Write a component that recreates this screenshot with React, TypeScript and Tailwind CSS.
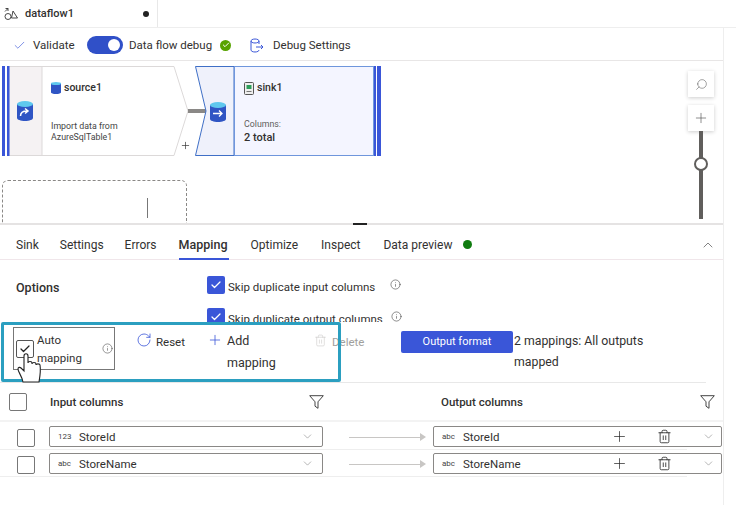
import { Check, ChevronDown, ChevronUp, Info, Plus, RotateCw, Search, Trash2 } from "lucide-react";

const FONT = "font-['Roboto','Liberation_Sans',sans-serif]";

function Funnel() {
  return (
    <svg width="15" height="14" viewBox="0 0 15 14" fill="none" stroke="#444" strokeWidth="1">
      <path d="M0.7 0.7h13.6L9 6.8v6.5L6 11.2V6.8z" />
    </svg>
  );
}

function DbIcon({ arrow }: { arrow: "curve" | "right" }) {
  return (
    <svg width="16" height="20" viewBox="0 0 16 20">
      <path d="M0 3v14c0 1.600 3.600 3 8 3s8-1.400 8-3V3z" fill="#2f55c4" />
      <ellipse cx="8" cy="3" rx="8" ry="3" fill="#5fc8ee" />
      {arrow === "curve" ? (
        <path d="M3.500 15c0-3.500 2-5 6.500-5M8 7.500l3 2.500-3 2.500" fill="none" stroke="#fff" strokeWidth="1.500" />
      ) : (
        <path d="M3 11.500h9M9 8.500l3 3-3 3" fill="none" stroke="#fff" strokeWidth="1.300" />
      )}
    </svg>
  );
}

function BlueCheck() {
  return (
    <span className="flex h-[18px] w-[18px] shrink-0 items-center justify-center rounded-[2px] bg-[#3a56d8]">
      <Check size={12} strokeWidth={2.5} className="text-white" />
    </span>
  );
}

function OptionRow({ label, infoLeft }: { label: string; infoLeft: string }) {
  return (
    <div className="flex h-[18px] items-center">
      <BlueCheck />
      <span className="ml-[3px] mt-[4px] whitespace-nowrap text-[#323130]">{label}</span>
      <Info size={11} strokeWidth={1.300} className={`${infoLeft} -mt-[1px] shrink-0 text-[#444]`} />
    </div>
  );
}

function EmptyBox({ className }: { className: string }) {
  return <span className={`block shrink-0 rounded-[2px] border border-[#777] bg-white ${className}`} />;
}

function Select({ kind, name, width, tools }: { kind: string; name: string; width: string; tools?: boolean }) {
  return (
    <div className={`flex h-[21px] items-center rounded-[2px] border border-[#8a8886] bg-white ${width}`}>
      <span className="ml-[8px] w-[21px] text-[8px] text-[#444]">{kind}</span>
      <span className="text-[#323130]">{name}</span>
      <span className="flex-1" />
      {tools && (
        <>
          <Plus size={17} strokeWidth={1} className="mr-[29px] text-[#222]" />
          <Trash2 size={15} strokeWidth={1.300} className="mr-[30px] text-[#222]" />
        </>
      )}
      <ChevronDown size={13} strokeWidth={1} className={`${tools ? "mr-[6px]" : "mr-[8px]"} text-[#777]`} />
    </div>
  );
}

function MappingRow({ kindIn, name }: { kindIn: string; name: string }) {
  return (
    <div className="mb-[3px] flex h-[24px] w-[687px] items-start border-b border-[#eeeeee] pl-[17px]">
      <EmptyBox className="mt-[3px] h-[18px] w-[18px]" />
      <div className="ml-[14px]">
        <Select kind={kindIn} name={name} width="w-[274px]" />
      </div>
      <div className="ml-[26px] mt-[7px] flex w-[77px] items-center">
        <span className="h-px w-[71px] bg-[#c8c6c4]" />
        <span className="h-0 w-0 border-y-[4px] border-l-[6px] border-y-transparent border-l-[#c8c6c4]" />
      </div>
      <div className="relative ml-[7px] shrink-0">
        <Select kind="abc" name={name} width="w-[289px]" tools />
      </div>
    </div>
  );
}

function Canvas() {
  return (
    <div className="relative h-[163px] w-[723px] overflow-hidden border-t border-[#e8e6e6]">
      {/* source node */}
      <div className="absolute left-[2px] top-[5px] h-[90px] w-[187px]">
        <svg className="absolute inset-0" width="187" height="90" viewBox="0 0 187 90">
          <path d="M7 0.500H172L186 45L172 89.500H7z" fill="#fff" stroke="#dcd9d9" />
          <rect x="7" y="0.500" width="33" height="89" fill="#f5f2f3" stroke="#dcd9d9" />
          <rect x="0" y="0" width="3" height="90" fill="#3a56d8" />
          <rect x="5" y="0" width="2.500" height="90" fill="#3a56d8" />
        </svg>
        <span className="absolute left-[15px] top-[35px]"><DbIcon arrow="curve" /></span>
        <div className="absolute left-[49px] top-[14px] flex items-center gap-[3px]">
          <svg width="10" height="12" viewBox="0 0 10 12">
            <path d="M0 1.500v9C0 11.300 2.200 12 5 12s5-.7 5-1.500v-9z" fill="#2f55c4" />
            <ellipse cx="5" cy="1.500" rx="5" ry="1.500" fill="#5fc8ee" />
          </svg>
          <span className="text-[10.500px] font-medium leading-4 text-[#323130]">source1</span>
        </div>
        <p className="absolute left-[49px] top-[55px] text-[8.800px] leading-[11px] text-[#444]">
          Import data from
          <br />
          AzureSqlTable1
        </p>
      </div>
      <Plus size={11} strokeWidth={1.500} className="absolute left-[180px] top-[79px] text-[#333]" />
      <span className="absolute left-[188px] top-[48px] h-[4px] w-[18px] bg-[#8a8886]" />
      {/* sink node */}
      <div className="absolute left-[195px] top-[5px] h-[90px] w-[186px]">
        <svg className="absolute inset-0" width="186" height="90" viewBox="0 0 186 90">
          <path d="M0.500 0.500H39V89.500H0.500L11 45z" fill="#eff1fb" stroke="#3f6fc6" />
          <rect x="39.500" y="0.500" width="139" height="89" fill="#f4f5ff" stroke="#6f96dc" />
          <rect x="179" y="0" width="2" height="90" fill="#3a56d8" />
          <rect x="182" y="0" width="4" height="90" fill="#3a56d8" />
        </svg>
        <span className="absolute left-[15px] top-[36px]"><DbIcon arrow="right" /></span>
        <div className="absolute left-[49px] top-[14px] flex items-center gap-[3px]">
          <svg width="10" height="13" viewBox="0 0 10 13">
            <rect x="0.500" y="0.500" width="9" height="12" rx="1" fill="#eee" stroke="#555" />
            <rect x="2.500" y="3" width="5" height="4" fill="#2e9d5b" />
            <path d="M2.500 9.500h5" stroke="#777" />
          </svg>
          <span className="text-[10.500px] font-medium leading-4 text-[#323130]">sink1</span>
        </div>
        <span className="absolute left-[49px] top-[52px] text-[8.800px] leading-[12px] text-[#605e5c]">Columns:</span>
        <span className="absolute left-[49px] top-[64px] text-[11px] font-medium leading-[16px] text-[#323130]">2 total</span>
      </div>
      {/* second, dashed node */}
      <div className="absolute left-[2px] top-[119px] h-[50px] w-[185px] rounded-[6px] border border-dashed border-[#8a8886]" />
      <span className="absolute left-[147px] top-[137px] h-[20px] w-px bg-[#777]" />
      {/* zoom controls */}
      <div className="absolute left-[688px] top-[10px] flex h-[26px] w-[26px] items-center justify-center bg-white shadow-[0_1px_4px_rgba(0,0,0,0.2)]">
        <Search size={13} strokeWidth={1} className="-scale-x-100 text-[#555]" />
      </div>
      <div className="absolute left-[688px] top-[44px] flex h-[26px] w-[26px] items-center justify-center bg-white shadow-[0_1px_4px_rgba(0,0,0,0.2)]">
        <Plus size={16} strokeWidth={1} className="text-[#555]" />
      </div>
      <span className="absolute left-[699px] top-[70px] h-[88px] w-[4px] bg-[#605e5c]" />
      <span className="absolute left-[694px] top-[96px] h-[14px] w-[14px] rounded-full border-2 border-[#605e5c] bg-white" />
    </div>
  );
}

export default function App() {
  return (
    <div className={`${FONT} relative h-[505px] w-[736px] overflow-hidden bg-white text-[11.500px] leading-4 text-[#323130]`}>
      {/* tab bar */}
      <div className="flex h-[28px] border-b border-[#eeeeee]">
        <div className="flex w-[158px] items-center border-r border-[#e8e8e8] pl-[4px]">
          <svg width="14" height="14" viewBox="0 0 14 14" fill="none" stroke="#333" strokeWidth="0.900">
            <circle cx="4" cy="9.500" r="3" />
            <path d="M9 4l4.500 7H7.500zM1 4.500l3-3M4 1.500h-2.500M4 1.500v2.500" />
          </svg>
          <span className="ml-[7px] text-[11px] font-medium">dataflow1</span>
          <span className="ml-[69px] h-[6px] w-[6px] rounded-full bg-[#222]" />
        </div>
      </div>
      {/* toolbar */}
      <div className="flex h-[32px] items-center pl-[13px] pt-[2px]">
        <Check size={13} strokeWidth={1.200} className="text-[#3a56d8]" />
        <span className="ml-[7px] w-[40px]">Validate</span>
        <span className="ml-[14px] flex h-[18px] w-[36px] items-center justify-end rounded-full bg-[#3050c8] pr-[3px]">
          <span className="h-[12px] w-[12px] rounded-full bg-white" />
        </span>
        <span className="ml-[6px] w-[84px]">Data flow debug</span>
        <span className="ml-[7px] flex h-[11px] w-[11px] items-center justify-center rounded-full bg-[#57a300]">
          <Check size={8} strokeWidth={3} className="text-white" />
        </span>
        <svg className="ml-[19px]" width="14" height="15" viewBox="0 0 14 15" fill="none" stroke="#3a56d8" strokeWidth="1">
          <path d="M1 3v9c0 1 1.500 2 4 2s4-1 4-2M1 3c0-1 1.500-2 4-2s4 1 4 2-1.500 2-4 2-4-1-4-2zM9 3v3M6 9h7M11 7l2 2-2 2" />
        </svg>
        <span className="ml-[9px]">Debug Settings</span>
      </div>
      <Canvas />
      {/* divider and resize handle */}
      <div className="relative h-[2px] w-[723px] bg-[#e5e3e3]">
        <span className="absolute left-[353px] top-0 h-[2px] w-[14px] bg-[#222]" />
      </div>
      {/* bottom panel tabs */}
      <div className="flex h-[35px] w-[723px] items-center border-b border-[#f0e6ea] pl-[16px] pt-[5px] text-[12px]">
        <span>Sink</span>
        <span className="ml-[21px]">Settings</span>
        <span className="ml-[21px]">Errors</span>
        <span className="relative ml-[22px] flex h-full w-[50px] items-center whitespace-nowrap text-[12.500px] font-medium">
          Mapping
          <span className="absolute inset-x-0 bottom-[-1px] h-[2px] bg-[#3a56d8]" />
        </span>
        <span className="ml-[22px]">Optimize</span>
        <span className="ml-[23px]">Inspect</span>
        <span className="ml-[23px] w-[71px] whitespace-nowrap">Data preview</span>
        <span className="ml-[9px] h-[9px] w-[9px] rounded-full bg-[#107c10]" />
        <ChevronUp size={16} strokeWidth={1} className="ml-auto mr-[7px] text-[#444]" />
      </div>
      {/* options */}
      <div className="flex h-[62px] overflow-hidden pl-[16px] pt-[16px]">
        <span className="mt-[4px] w-[191px] text-[12.500px] font-medium">Options</span>
        <div className="flex flex-col gap-[14px]">
          <OptionRow label="Skip duplicate input columns" infoLeft="ml-[15px]" />
          <OptionRow label="Skip duplicate output columns" infoLeft="ml-[8px]" />
        </div>
      </div>
      {/* mapping toolbar */}
      <div className="relative flex h-[61px] w-[706px] items-start border-b border-[#e8e8e8]">
        <span className="pointer-events-none absolute left-[1px] top-0 h-[60px] w-[340px] rounded-[2px] border-[3px] border-[#2b9fc0]" />
        <div className="relative ml-[13px] mt-[5px] flex h-[43px] w-[102px] shrink-0 items-center border border-[#777] pl-[2px]">
          <span className="flex h-[18px] w-[18px] shrink-0 items-center justify-center rounded-[2px] border border-[#555]">
            <Check size={12} strokeWidth={2.500} className="text-[#222]" />
          </span>
          <span className="ml-[3px] w-[60px] leading-[18px]">Auto mapping</span>
          <Info size={11} strokeWidth={1.200} className="ml-[5px] text-[#444]" />
        </div>
        <RotateCw size={16} strokeWidth={1.200} className="ml-[21px] mt-[10px] shrink-0 text-[#3a56d8]" />
        <span className="ml-[4px] mt-[12px] w-[29px] shrink-0">Reset</span>
        <Plus size={16} strokeWidth={1.200} className="ml-[22px] mt-[10px] shrink-0 text-[#3a56d8]" />
        <span className="ml-[4px] mt-[8px] w-[60px] shrink-0 text-[12.500px] leading-[22px]">Add mapping</span>
        <Trash2 size={13} strokeWidth={1} className="ml-[27px] mt-[12px] shrink-0 text-[#c8c6c4]" />
        <span className="ml-[5px] mt-[12px] w-[35px] shrink-0 text-[#a19f9d]">Delete</span>
        <span className="ml-[34px] mt-[9px] flex h-[22px] w-[112px] shrink-0 items-center justify-center rounded-[2px] bg-[#3a56d8] text-[11px] text-white">
          Output format
        </span>
        <span className="ml-[1px] mt-[9px] w-[150px] text-[12.300px] leading-[21px]">2 mappings: All outputs mapped</span>
        {/* pointer over the checkbox */}
        <svg className="absolute left-[17px] top-[28px]" width="28" height="33" viewBox="0 0 28 33" fill="#fff" stroke="#222" strokeWidth="1.100">
          <path d="M6 32C5 26 1 22 1 19c0-2 2-2 3-1l3 3V6c0-3 4-3 4 0v7c0-2 4-2 4 0v1c0-2 4-2 4 0v1c0-1.500 4-1.500 4 0 1 6 0 11-1 17z" />
        </svg>
      </div>
      {/* column headers */}
      <div className="flex h-[39px] w-[723px] items-center border-b-2 border-[#f3f3f3] pl-[9px]">
        <EmptyBox className="h-[18px] w-[18px]" />
        <span className="ml-[23px] w-[259px] font-medium">Input columns</span>
        <Funnel />
        <span className="ml-[117px] w-[259px] font-medium">Output columns</span>
        <Funnel />
      </div>
      <div className="pt-[4px]">
        <MappingRow kindIn="123" name="StoreId" />
        <MappingRow kindIn="abc" name="StoreName" />
      </div>
      {/* right edge of the panel */}
      <span className="absolute bottom-0 left-[723px] top-[28px] w-px bg-[#eeeeee]" />
    </div>
  );
}
